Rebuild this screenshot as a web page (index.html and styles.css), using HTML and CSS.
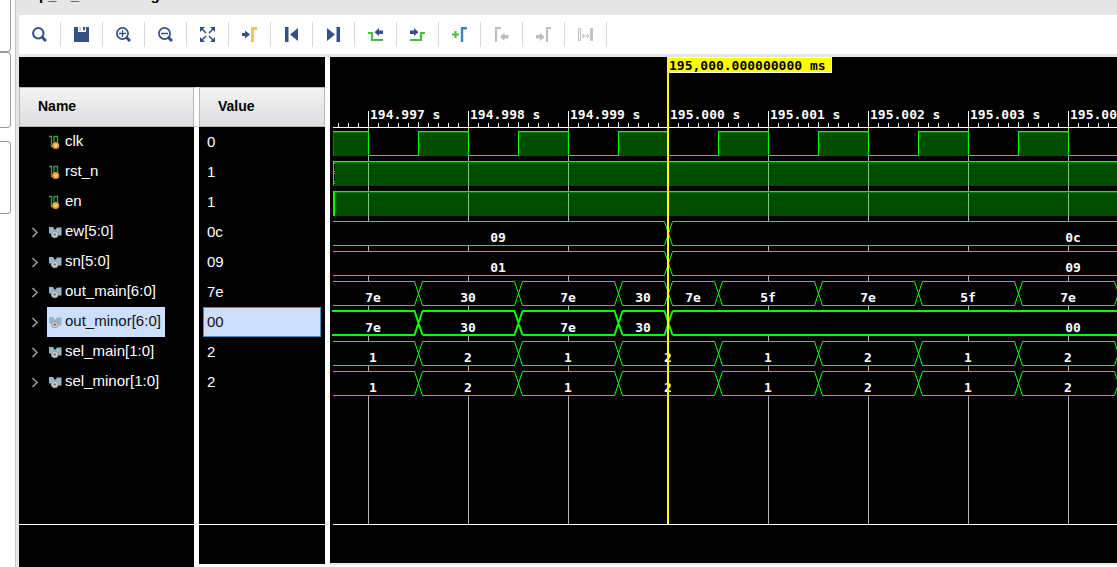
FILE: index.html
```html
<!DOCTYPE html>
<html lang="en">
<head>
<meta charset="utf-8">
<title>tp_tb_behav.wcfg</title>
<link rel="stylesheet" href="styles.css">
</head>
<body>
<div class="app">
  <aside class="dock"><div class="dock-box first"></div><div class="dock-box second"></div><div class="dock-box third"></div></aside>
  <main class="viewer">
    <header class="title-bar"><h1 class="title">tp_tb_behav.wcfg</h1></header>
    <nav class="toolbar" aria-label="Waveform tools">
      <button class="tool" aria-label="Find"><svg class="icon" viewBox="0 0 15 15"><circle cx="6.3" cy="6.3" r="5.2" fill="none" stroke="#345087" stroke-width="2"/><path d="M10 10l4 4" stroke="#345087" stroke-width="3"/></svg></button>
      <button class="tool" aria-label="Save"><svg class="icon" viewBox="0 0 15 15"><path d="M0 0h4v5h8V0h3v15H0z" fill="#345087"/><path d="M5 0h2v4H5zM9 0h2v4H9z" fill="#c4cedf"/><path d="M7 0h2v4H7z" fill="#fff"/><path d="M9 0h2v3H9z" fill="#345087"/></svg></button>
      <button class="tool" aria-label="Zoom in"><svg class="icon" viewBox="0 0 15 15"><circle cx="6.5" cy="6.5" r="5.6" fill="none" stroke="#345087" stroke-width="1.7"/><path d="M10.5 10.5l3.5 3.5" stroke="#345087" stroke-width="3"/><path d="M3 6.5h7M6.5 3v7" stroke="#345087" stroke-width="1.3"/></svg></button>
      <button class="tool" aria-label="Zoom out"><svg class="icon" viewBox="0 0 15 15"><circle cx="6.5" cy="6.5" r="5.6" fill="none" stroke="#345087" stroke-width="1.7"/><path d="M10.5 10.5l3.5 3.5" stroke="#345087" stroke-width="3"/><path d="M3 6.5h7" stroke="#345087" stroke-width="1.5"/></svg></button>
      <button class="tool" aria-label="Zoom fit"><svg class="icon" viewBox="0 0 15 15"><path d="M0 0h5L0 5zM15 0v5L10 0zM0 15v-5l5 5zM15 15h-5l5-5z" fill="#345087"/><path d="M1 1l5 5M14 1L9 6M1 14l5-5M14 14L9 9" stroke="#345087" stroke-width="1.6"/></svg></button>
      <button class="tool" aria-label="Go to cursor"><svg class="icon" viewBox="0 0 15 15"><path d="M0 6h3V3.500l5 4-5 4V9H0z" fill="#345087"/><path d="M10.500 15V1.500H15" fill="none" stroke="#e5c865" stroke-width="3"/></svg></button>
      <button class="tool" aria-label="Go to start"><svg class="icon" viewBox="0 0 15 15"><path d="M1 0h3.500v15H1zM14 1v13L6 7.500z" fill="#345087"/></svg></button>
      <button class="tool" aria-label="Go to end"><svg class="icon" viewBox="0 0 15 15"><path d="M10.500 0H14v15h-3.500zM1 1v13l8-6.500z" fill="#345087"/></svg></button>
      <button class="tool" aria-label="Previous transition"><svg class="icon" viewBox="0 0 15 15"><path d="M0 6h4v7h11" fill="none" stroke="#4dba43" stroke-width="2.200"/><path d="M15 3.500h-4V1L6.500 5.200 11 9V7h4z" fill="#345087"/></svg></button>
      <button class="tool" aria-label="Next transition"><svg class="icon" viewBox="0 0 15 15"><path d="M0 13h11V6h4" fill="none" stroke="#4dba43" stroke-width="2.200"/><path d="M0 3.500h4V1l4.500 4.200L4 9V7H0z" fill="#345087"/></svg></button>
      <button class="tool" aria-label="Add marker"><svg class="icon" viewBox="0 0 15 15"><path d="M0 7.500h7M3.500 4v7" stroke="#4dba43" stroke-width="2.200"/><path d="M10 15V1.200h5" fill="none" stroke="#3f83b5" stroke-width="2.400"/></svg></button>
      <button class="tool" aria-label="Previous marker" disabled><svg class="icon" viewBox="0 0 15 15"><path d="M2 15V1h5" fill="none" stroke="#bfbfbf" stroke-width="2.200"/><path d="M14.500 8h-4V5.500L6 10l4.500 4v-2.500h4z" fill="#bcbcbc"/></svg></button>
      <button class="tool" aria-label="Next marker" disabled><svg class="icon" viewBox="0 0 15 15"><path d="M11 15V1h4" fill="none" stroke="#bfbfbf" stroke-width="2.200"/><path d="M0 8h4V5.500L8.500 10 4 14v-2.500H0z" fill="#bcbcbc"/></svg></button>
      <button class="tool" aria-label="Swap cursors" disabled><svg class="icon" viewBox="0 0 15 15"><path d="M.5 1.500h2v12h-2z" fill="none" stroke="#bcbcbc"/><path d="M12 1h3v13h-3z" fill="#c4c4c4"/><path d="M4 9h7M6 7L4 9l2 2M9 7l2 2-2 2" fill="none" stroke="#bcbcbc"/></svg></button>
    </nav>
    <section class="panels">
      <div class="signals">
        <div class="band"></div>
        <table class="signal-table">
          <colgroup><col class="col-name"><col class="col-value"></colgroup>
          <thead><tr><th class="head name-head" scope="col">Name</th><th class="head" scope="col">Value</th></tr></thead>
          <tbody id="signal-rows"></tbody>
        </table>
        <div class="rest"><div class="rest-name"></div><div class="rest-value"></div></div>
        <div class="foot"><div class="foot-name"></div><div class="foot-value"></div></div>
      </div>
      <div class="wave-panel"><svg id="wave" class="wave" role="img" aria-label="Signal waveforms"></svg></div>
    </section>
  </main>
</div>
<script src="wave.js"></script>
</body>
</html>
```
FILE: styles.css
```css
* { box-sizing: border-box; }
body { margin: 0; background: #fff; font-family: "Liberation Sans", Arial, sans-serif; font-size: 15px; }
.app { display: flex; height: 100vh; overflow: hidden; }
.dock { width: 15px; flex: none; display: flex; flex-direction: column; }
.dock-box { width: 11px; border: 1px solid #999; border-left: 0; }
.first { height: 52px; border-top: 0; border-radius: 0 0 4px 0; }
.second { height: 76px; border-radius: 0 4px 4px 0; }
.third { height: 73px; margin-top: 13px; border-radius: 0 4px 4px 0; }
.viewer { flex: 1; min-width: 0; display: flex; flex-direction: column; border-left: 1px solid #c8c8c8; }
.title-bar { height: 15px; flex: none; background: #e6e6e6; overflow: hidden; padding-left: 18px; }
.title { margin: -13px 0 0; font-size: 15px; line-height: 16px; }
.toolbar { display: flex; flex: none; padding: 7px 0; border-left: 3px solid #e6e6e6; }
.tool { width: 42px; height: 25px; padding: 0; border: 0; border-right: 1px solid #d8d8d8; background: none; display: flex; align-items: center; justify-content: center; }
.icon { width: 15px; height: 15px; display: block; }
.panels { flex: 1; min-height: 0; display: flex; gap: 5px; border-left: 3px solid #e6e6e6; border-top: 3px solid #e6e6e6; }
.signals { width: 306px; flex: none; display: flex; flex-direction: column; }
.band { height: 30px; background: #000; }
.signal-table { width: 100%; table-layout: fixed; border-collapse: separate; border-spacing: 0; color: #fff; }
.col-name { width: 180px; }
.head { height: 40px; padding: 0 0 2px 18px; font-size: 14px; text-align: left; color: #000; border: 1px solid #b8b8b8; background: linear-gradient(#f3f3f3, #dedee1); }
.name-head { box-shadow: inset -1px 0 #b8b8b8; border-right: 5px solid #fff; background-clip: padding-box; }
.cell { height: 30px; padding: 0; background: #000; }
.name-cell { border-right: 5px solid #fff; }
.signal { display: flex; align-items: center; height: 30px; padding-left: 12px; }
.expander { width: 16px; height: 12px; padding: 0; border: 0; background: none; display: block; }
.chevron { display: block; width: 8px; height: 12px; }
.label { display: flex; align-items: center; height: 30px; gap: 3px; padding: 0 4px 0 1px; line-height: 28px; }
.label-text { height: 30px; }
.signal-icon { width: 14px; height: 14px; display: block; }
.value { height: 30px; line-height: 28px; margin: 0 4px; padding-left: 3px; border: 1px solid transparent; }
.selected .label { background: #ccdfff; color: #111; }
.selected .value { background: #ccdfff; color: #111; border-color: #3d91d1; }
.rest { flex: 1; display: grid; grid-template-columns: 175px 126px; gap: 5px; }
.rest-name, .rest-value { background: #000; border-bottom: 1px solid #fff; }
.foot { height: 42px; display: grid; grid-template-columns: 175px 126px; gap: 5px; }
.foot-name { background: #000; }
.foot-value { background: #000; margin-bottom: 3px; }
.wave-panel { flex: 1; min-width: 0; margin-bottom: 4px; background: #000; overflow: hidden; box-shadow: 0 2px #e8e8e8; }
.wave { display: block; width: 100%; height: 506px; }
.wave text { font-family: "DejaVu Sans Mono", monospace; font-size: 13px; font-weight: bold; fill: #fff; }
.wave .flag-text { fill: #000; }
```
FILE: wave.js
```js
const signals = [
  ["clk", "0"], ["rst_n", "1"], ["en", "1"],
  ["ew[5:0]", "0c"], ["sn[5:0]", "09"],
  ["out_main[6:0]", "7e"], ["out_minor[6:0]", "00"],
  ["sel_main[1:0]", "2"], ["sel_minor[1:0]", "2"]
];
const bitIcon = '<svg class="signal-icon" viewBox="0 0 14 14"><path d="M1 1.500h2.500v10H6v-10h3.500v6" fill="none" stroke="#35a047" stroke-width="1.300"/><circle cx="7.700" cy="10.500" r="3.500" fill="#f49a2a"/><path d="M6.300 9.300l1.400 2.500 1.400-2.500" fill="none" stroke="#fff"/></svg>';
const busIcon = '<svg class="signal-icon" viewBox="0 0 14 14"><path d="M1 2.500h4l2 2.500 2-2.500h4v8H9l-2-2-2 2H3v-2H1z" fill="#8fb9ce"/><path d="M1 2.500h4v2M13 2.500v8" fill="none" stroke="#a8b0b5"/><circle cx="6.800" cy="9.500" r="3.300" fill="#d0d0d0" stroke="#999"/><circle cx="6.800" cy="9.500" r="1.300" fill="#777"/></svg>';
const chevron = '<svg class="chevron" viewBox="0 0 8 12"><path d="M1.500 2L6 6.500 1.500 11" fill="none" stroke="#9a9a9a" stroke-width="1.600"/></svg>';

document.getElementById("signal-rows").innerHTML = signals.map(([name, value]) => {
  const bus = name.includes("[");
  const expander = bus
    ? `<button class="expander" aria-label="Expand ${name}">${chevron}</button>`
    : '<span class="expander"></span>';
  return `<tr class="${name === "out_minor[6:0]" ? "selected" : ""}">
    <td class="cell name-cell"><div class="signal">${expander}<span class="label">${bus ? busIcon : bitIcon}<span class="label-text">${name}</span></span></div></td>
    <td class="cell"><div class="value">${value}</div></td></tr>`;
}).join("");

const svg = document.getElementById("wave");
const CURSOR = 338;

function draw() {
  const END = svg.clientWidth;
  const out = [];
  const rect = (x, y, w, h, fill) => out.push(`<rect x="${x}" y="${y}" width="${w}" height="${h}" fill="${fill}"/>`);
  const text = (x, y, s, anchor = "middle", cls = "") => {
    if (x < END) out.push(`<text x="${x}" y="${y}" text-anchor="${anchor}" class="${cls}">${s}</text>`);
  };

  /* Ruler and time grid */
  rect(3, 70, END, 1, "#fff");
  for (let x = 8, i = 7; x < END; x += 10, i++) {
    if (i % 10 !== 0) rect(x, i % 5 === 0 ? 65 : 66, 1, 5, "#fff");
  }
  for (let x = 38, t = 194997; x < END; x += 100, t++) {
    rect(x, 54, 1, 17, "#fff");
    rect(x, 71, 1, 396, "#b4b4b4");
    text(x + 2, 62, (t / 1000).toFixed(3) + " s", "start");
  }

  /* One-bit signals */
  const high = (x, y, w) => {
    rect(x, y, w, 25, "#004c00");
    rect(x, y, 1, 25, "#008000");
    rect(x, y + 1, w, 1, "#008000");
    rect(x, y, w, 1, "#00ff00");
  };
  high(3, 74, 35);
  for (let x = 38; x < END; x += 100) {
    rect(x, 74, 1, 25, "#00ff00");
    rect(x, 98, 50, 1, "#00ff00");
    high(x + 50, 74, 50);
    rect(x + 50, 74, 1, 25, "#00ff00");
  }
  high(3, 104, END);
  high(3, 134, END);
  for (let x = 38; x < END; x += 100) {
    rect(x, 106, 1, 23, "#84c484");
    rect(x, 136, 1, 23, "#84c484");
  }
  rect(3, 104, 1, 24, "#00ff00");
  rect(4, 106, 1, 22, "#000");
  for (const y of [106, 114, 116, 124, 126]) rect(4, y, 1, 1, "#00ff00");
  rect(3, 134, 2, 25, "#00ff00");

  /* Buses: edges are the transition points, labels are [x, text] */
  const bus = (y, edges, labels, thick) => {
    const c = thick ? 0 : 0.5;
    const x0 = thick ? 2 : 3;
    rect(x0, y, END, 25, "#000");
    let from = x0;
    let d = "";
    for (const e of edges) {
      const m = e + 0.5;
      d += `M${from} ${y + c}H${m - 4}L${m + 4} ${y + 24 + c}`;
      d += `M${from} ${y + 24 + c}H${m - 4}L${m + 4} ${y + c}`;
      from = m + 4;
    }
    d += `M${from} ${y + c}H${END + 20}M${from} ${y + 24 + c}H${END + 20}`;
    out.push(`<path d="${d}" fill="none" stroke="#00ff00" stroke-width="${thick ? 2 : 1}"/>`);
    for (const [x, s] of labels) text(x, y + 21, s);
  };
  const every = [];
  for (let x = 88; x < END + 5; x += 100) every.push(x);
  const main = [[43, "7e"], [138, "30"], [238, "7e"], [313, "30"], [363, "7e"]];
  const sel = [[43, "1"]];
  for (let x = 438, i = 0; x < END; x += 100, i++) main.push([x, i % 2 ? "7e" : "5f"]);
  for (let x = 138, i = 0; x < END; x += 100, i++) sel.push([x, i % 2 ? "1" : "2"]);

  bus(164, [CURSOR], [[168, "09"], [743, "0c"]]);
  bus(194, [CURSOR], [[168, "01"], [743, "09"]]);
  bus(224, [...every, CURSOR].sort((a, b) => a - b), main);
  bus(254, [88, 188, 288, CURSOR], [[43, "7e"], [138, "30"], [238, "7e"], [313, "30"], [743, "00"]], true);
  bus(284, every, sel);
  bus(314, every, sel);

  /* Bottom rule, cursor and its time flag */
  rect(3, 467, END, 1, "#fff");
  rect(CURSOR - 1, 0, 2, 467, "#ffff00");
  rect(CURSOR, 0, 164, 16, "#fff");
  rect(CURSOR, 1, 163, 14, "#ffff00");
  text(CURSOR + 1, 13, "195,000.000000000 ms", "start", "flag-text");

  svg.innerHTML = out.join("");
}

draw();
window.addEventListener("resize", draw);
```
